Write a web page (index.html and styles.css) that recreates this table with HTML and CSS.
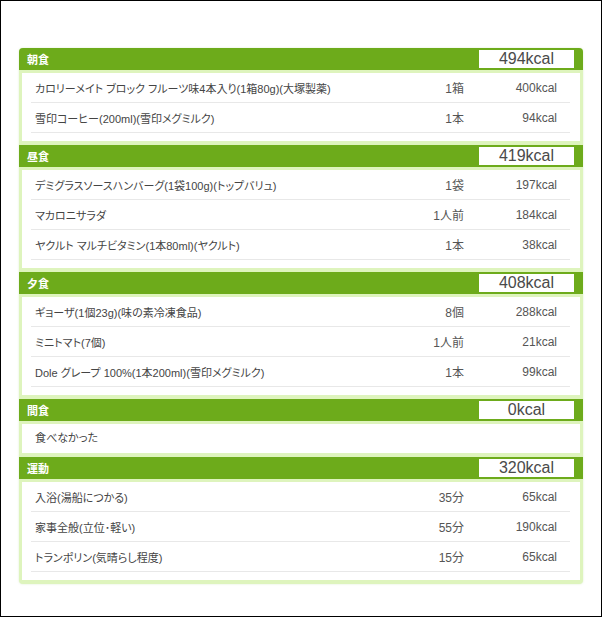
FILE: index.html
```html
<!DOCTYPE html>
<html lang="ja">
<head>
<meta charset="utf-8">
<title>食事記録</title>
<link rel="stylesheet" href="styles.css">
</head>
<body>
<div class="frame">
  <div class="panel">
    <section class="meal">
      <div class="meal-head"><h2 class="meal-title">朝食</h2><span class="total">494kcal</span></div>
      <div class="meal-body">
        <div class="rows">
          <div class="row"><span class="name">カロリーメイト ブロック フルーツ味4本入り(1箱80g)(大塚製薬)</span><span class="qty">1箱</span><span class="kcal">400kcal</span></div>
          <div class="row"><span class="name">雪印コーヒー(200ml)(雪印メグミルク)</span><span class="qty">1本</span><span class="kcal">94kcal</span></div>
        </div>
      </div>
    </section>
    <section class="meal">
      <div class="meal-head"><h2 class="meal-title">昼食</h2><span class="total">419kcal</span></div>
      <div class="meal-body">
        <div class="rows">
          <div class="row"><span class="name">デミグラスソースハンバーグ(1袋100g)(トップバリュ)</span><span class="qty">1袋</span><span class="kcal">197kcal</span></div>
          <div class="row"><span class="name">マカロニサラダ</span><span class="qty">1人前</span><span class="kcal">184kcal</span></div>
          <div class="row"><span class="name">ヤクルト マルチビタミン(1本80ml)(ヤクルト)</span><span class="qty">1本</span><span class="kcal">38kcal</span></div>
        </div>
      </div>
    </section>
    <section class="meal">
      <div class="meal-head"><h2 class="meal-title">夕食</h2><span class="total">408kcal</span></div>
      <div class="meal-body">
        <div class="rows">
          <div class="row"><span class="name">ギョーザ(1個23g)(味の素冷凍食品)</span><span class="qty">8個</span><span class="kcal">288kcal</span></div>
          <div class="row"><span class="name">ミニトマト(7個)</span><span class="qty">1人前</span><span class="kcal">21kcal</span></div>
          <div class="row"><span class="name">Dole グレープ 100%(1本200ml)(雪印メグミルク)</span><span class="qty">1本</span><span class="kcal">99kcal</span></div>
        </div>
      </div>
    </section>
    <section class="meal">
      <div class="meal-head"><h2 class="meal-title">間食</h2><span class="total">0kcal</span></div>
      <div class="meal-body">
        <div class="note">食べなかった</div>
      </div>
    </section>
    <section class="meal">
      <div class="meal-head"><h2 class="meal-title">運動</h2><span class="total">320kcal</span></div>
      <div class="meal-body">
        <div class="rows">
          <div class="row"><span class="name">入浴(湯船につかる)</span><span class="qty">35分</span><span class="kcal">65kcal</span></div>
          <div class="row"><span class="name">家事全般(立位･軽い)</span><span class="qty">55分</span><span class="kcal">190kcal</span></div>
          <div class="row"><span class="name">トランポリン(気晴らし程度)</span><span class="qty">15分</span><span class="kcal">65kcal</span></div>
        </div>
      </div>
    </section>
  </div>
</div>
</body>
</html>
```

FILE: styles.css
```css
* { box-sizing: border-box; }

html, body {
  margin: 0;
  padding: 0;
  background: #fff;
}

body {
  font-family: "Liberation Sans", "Noto Sans CJK JP", sans-serif;
  color: #444;
}

.frame {
  width: 602px;
  height: 617px;
  border: 1px solid #000;
  padding: 47px 18px 0 18px;
}

.panel {
  width: 564px;
  background: #def4bd;
  border-radius: 4px;
  overflow: hidden;
  box-shadow: 0 0 2px rgba(150, 200, 100, 0.35);
}

.meal-head {
  height: 22px;
  background: #6dab1b;
  display: flex;
  align-items: center;
  justify-content: space-between;
  padding: 0 9px 0 8px;
}

.meal-title {
  margin: 0;
  font-size: 11px;
  font-weight: bold;
  color: #fff;
  font-family: "Noto Sans CJK JP", sans-serif;
  line-height: 22px;
}

.total {
  width: 95px;
  height: 18px;
  background: #fff;
  color: #4a4a4a;
  font-size: 16px;
  line-height: 18px;
  text-align: center;
  font-family: "Liberation Sans", sans-serif;
}

.meal-body {
  padding: 3px 3px 4px 3px;
}

.rows {
  background: #fff;
  padding: 0 10px 8px 9px;
}

.row {
  display: grid;
  grid-template-columns: 1fr auto 93px;
  align-items: center;
  height: 30px;
  padding: 0 13px 0 4px;
  border-bottom: 1px solid #e8e8e8;
}

.name {
  font-size: 11px;
  font-feature-settings: "palt";
  white-space: nowrap;
}

.qty {
  font-size: 12px;
  text-align: right;
  color: #555;
  font-feature-settings: "palt";
}

.kcal {
  font-size: 12px;
  text-align: right;
  color: #555;
}

.note {
  background: #fff;
  height: 29px;
  line-height: 29px;
  padding-left: 13px;
  font-size: 11px;
  font-feature-settings: "palt";
}
```
